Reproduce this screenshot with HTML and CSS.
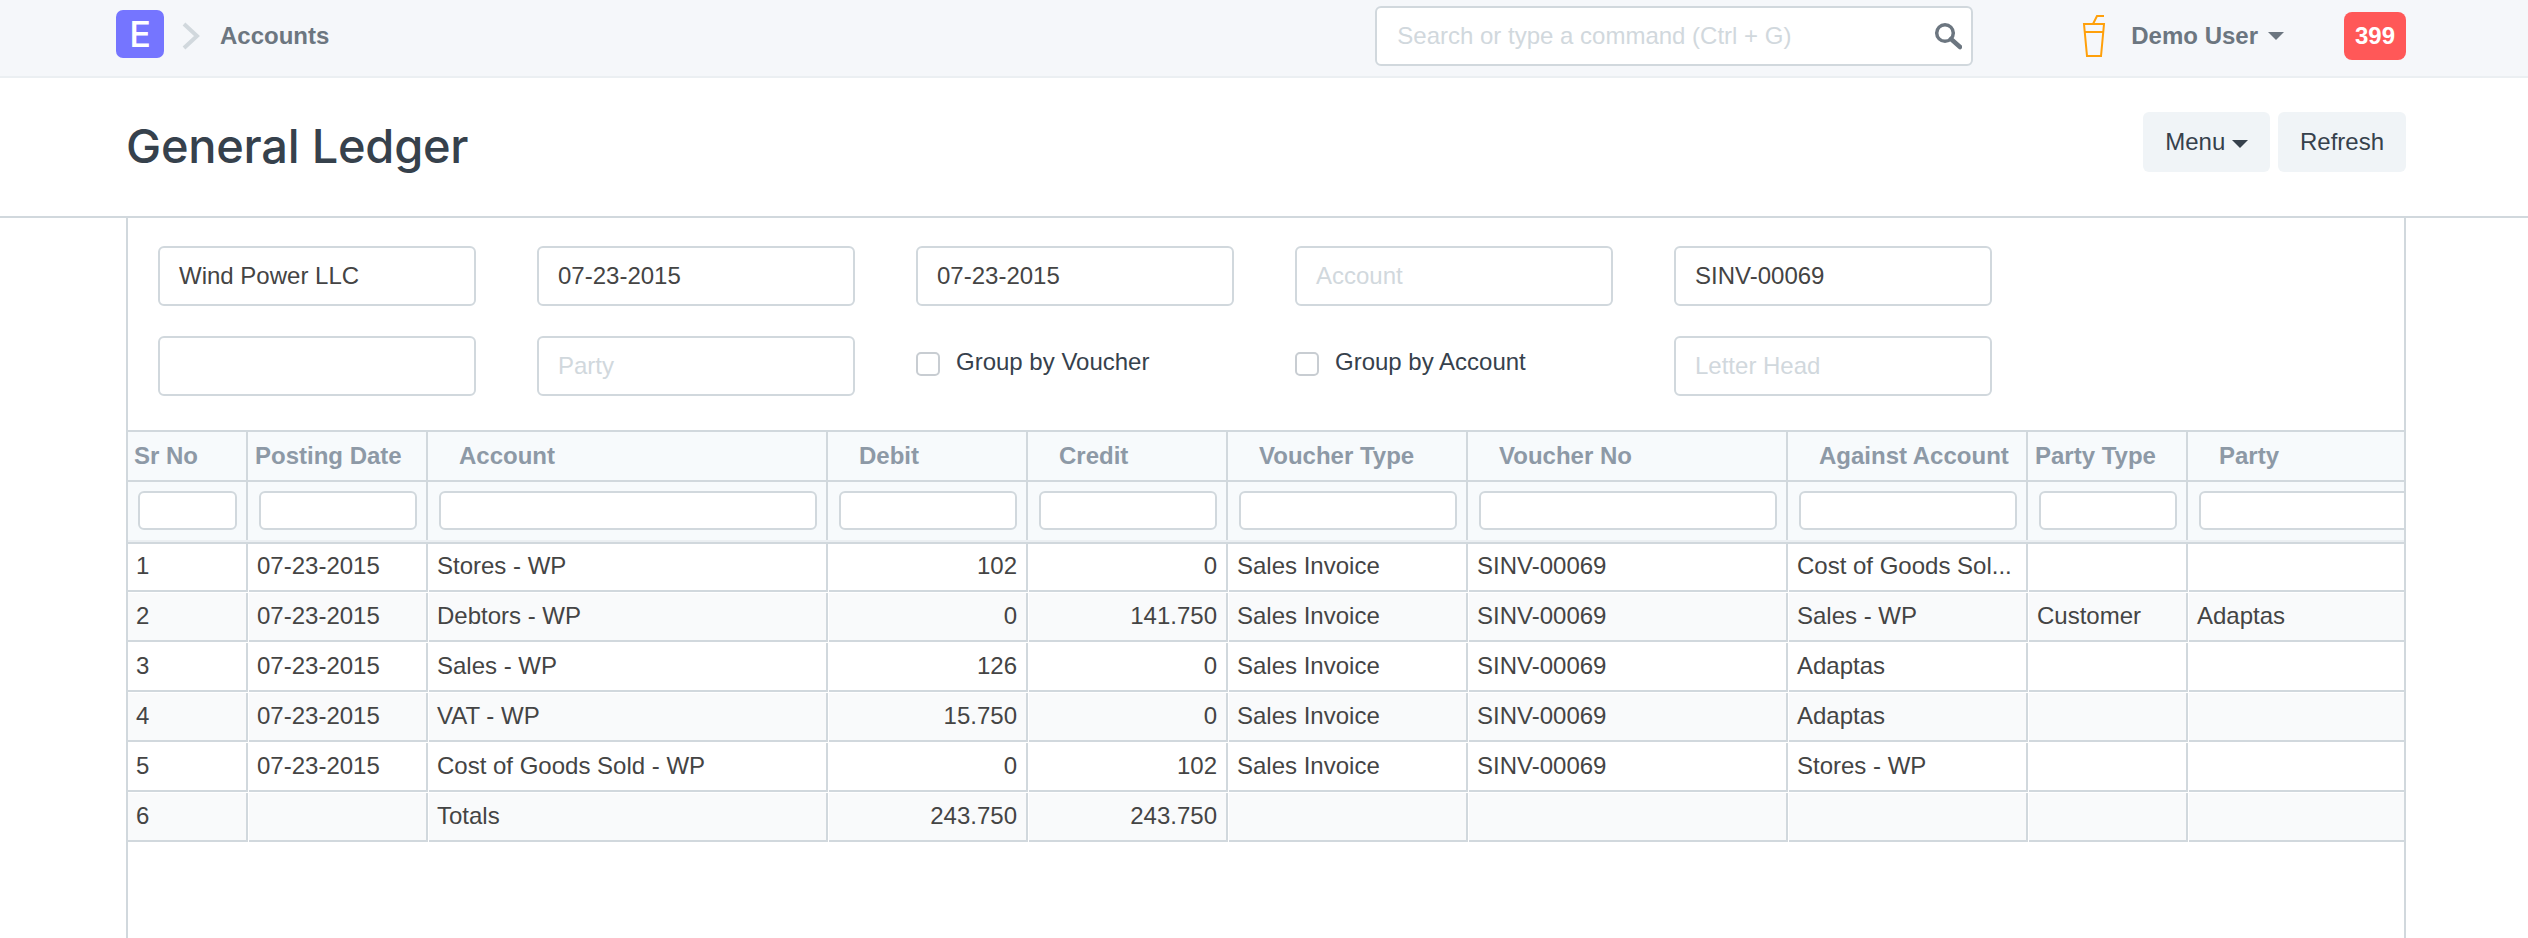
FILE: index.html
```html
<!DOCTYPE html>
<html>
<head>
    <link rel="stylesheet" href="styles.css">
</head>
<body>
    <nav class="navbar">
        <div class="logo">E</div>
        <svg class="crumb-arrow" width="18" height="28" viewBox="0 0 18 28"><path d="M2 2l13 12L2 26" fill="none" stroke="#d1d8dd" stroke-width="4"/></svg>
        <span class="crumb">Accounts</span>
        <div class="search">
            <span class="search-text">Search or type a command (Ctrl + G)</span>
            <svg width="28" height="28" viewBox="0 0 28 28"><circle cx="11" cy="11" r="8.3" fill="none" stroke="#6c7680" stroke-width="3.5"/><path d="M17 17l9 8" stroke="#6c7680" stroke-width="4.5" stroke-linecap="round"/></svg>
        </div>
        <svg class="cup" width="24" height="44" viewBox="0 0 24 44"><path d="M2 10h20l-3 32H5L2 10zM3 18h18M11 10l4-8h7" fill="none" stroke="#ffa00a" stroke-width="2"/></svg>
        <span class="user">Demo User</span>
        <span class="caret user-caret"></span>
        <span class="badge">399</span>
    </nav>

    <header class="page-head">
        <h1>General Ledger</h1>
        <div class="actions">
            <button class="btn">Menu <span class="caret btn-caret"></span></button>
            <button class="btn">Refresh</button>
        </div>
    </header>

    <main class="layout">
        <div class="filters">
            <div class="field">Wind Power LLC</div>
            <div class="field">07-23-2015</div>
            <div class="field">07-23-2015</div>
            <div class="field placeholder">Account</div>
            <div class="field">SINV-00069</div>
            <div class="field"></div>
            <div class="field placeholder">Party</div>
            <label class="check"><span class="box"></span>Group by Voucher</label>
            <label class="check"><span class="box"></span>Group by Account</label>
            <div class="field placeholder">Letter Head</div>
        </div>

        <div class="grid">
            <div class="row head">
                <div class="cell">Sr No</div>
                <div class="cell">Posting Date</div>
                <div class="cell indent">Account</div>
                <div class="cell indent">Debit</div>
                <div class="cell indent">Credit</div>
                <div class="cell indent">Voucher Type</div>
                <div class="cell indent">Voucher No</div>
                <div class="cell indent">Against Account</div>
                <div class="cell">Party Type</div>
                <div class="cell indent">Party</div>
            </div>
            <div class="row search-row">
                <div class="cell"><input></div>
                <div class="cell"><input></div>
                <div class="cell"><input></div>
                <div class="cell"><input></div>
                <div class="cell"><input></div>
                <div class="cell"><input></div>
                <div class="cell"><input></div>
                <div class="cell"><input></div>
                <div class="cell"><input></div>
                <div class="cell"><input></div>
            </div>
            <div class="row">
                <div class="cell">1</div>
                <div class="cell">07-23-2015</div>
                <div class="cell">Stores - WP</div>
                <div class="cell num">102</div>
                <div class="cell num">0</div>
                <div class="cell">Sales Invoice</div>
                <div class="cell">SINV-00069</div>
                <div class="cell">Cost of Goods Sol...</div>
                <div class="cell"></div>
                <div class="cell"></div>
            </div>
            <div class="row">
                <div class="cell">2</div>
                <div class="cell">07-23-2015</div>
                <div class="cell">Debtors - WP</div>
                <div class="cell num">0</div>
                <div class="cell num">141.750</div>
                <div class="cell">Sales Invoice</div>
                <div class="cell">SINV-00069</div>
                <div class="cell">Sales - WP</div>
                <div class="cell">Customer</div>
                <div class="cell">Adaptas</div>
            </div>
            <div class="row">
                <div class="cell">3</div>
                <div class="cell">07-23-2015</div>
                <div class="cell">Sales - WP</div>
                <div class="cell num">126</div>
                <div class="cell num">0</div>
                <div class="cell">Sales Invoice</div>
                <div class="cell">SINV-00069</div>
                <div class="cell">Adaptas</div>
                <div class="cell"></div>
                <div class="cell"></div>
            </div>
            <div class="row">
                <div class="cell">4</div>
                <div class="cell">07-23-2015</div>
                <div class="cell">VAT - WP</div>
                <div class="cell num">15.750</div>
                <div class="cell num">0</div>
                <div class="cell">Sales Invoice</div>
                <div class="cell">SINV-00069</div>
                <div class="cell">Adaptas</div>
                <div class="cell"></div>
                <div class="cell"></div>
            </div>
            <div class="row">
                <div class="cell">5</div>
                <div class="cell">07-23-2015</div>
                <div class="cell">Cost of Goods Sold - WP</div>
                <div class="cell num">0</div>
                <div class="cell num">102</div>
                <div class="cell">Sales Invoice</div>
                <div class="cell">SINV-00069</div>
                <div class="cell">Stores - WP</div>
                <div class="cell"></div>
                <div class="cell"></div>
            </div>
            <div class="row">
                <div class="cell">6</div>
                <div class="cell"></div>
                <div class="cell">Totals</div>
                <div class="cell num">243.750</div>
                <div class="cell num">243.750</div>
                <div class="cell"></div>
                <div class="cell"></div>
                <div class="cell"></div>
                <div class="cell"></div>
                <div class="cell"></div>
            </div>
        </div>
    </main>
</body>
</html>
```

FILE: styles.css
```css
html, body {
    height: 100%;
}

body {
    margin: 0;
    overflow: hidden;
    background: #fff;
    color: #36414c;
    font-family: "Liberation Sans", Arial, sans-serif;
    font-size: 24px;
    display: flex;
    flex-direction: column;
}

/* top bar */
.navbar {
    height: 78px;
    flex: none;
    box-sizing: border-box;
    display: flex;
    align-items: center;
    padding: 0 122px 4px 116px;
    background: #f5f7fa;
    border-bottom: 2px solid #ebeff2;
}

.logo {
    width: 48px;
    height: 48px;
    margin-bottom: 4px;
    border-radius: 7px;
    background: #7575ff;
    color: #fff;
    font-family: Inter, "Liberation Sans", sans-serif;
    font-size: 36px;
    font-weight: 500;
    line-height: 48px;
    text-align: center;
}

.crumb-arrow {
    margin-left: 18px;
}

.crumb {
    margin-left: 20px;
    color: #6c7680;
    font-weight: bold;
}

.search {
    width: 598px;
    height: 60px;
    box-sizing: border-box;
    margin-left: auto;
    margin-right: 109px;
    padding: 0 9px 0 20px;
    display: flex;
    align-items: center;
    justify-content: space-between;
    background: #fff;
    border: 2px solid #d1d8dd;
    border-radius: 6px;
}

.search-text {
    color: #d1d8dd;
}

.cup {
    margin-right: 25px;
}

.user {
    color: #6c7680;
    font-weight: bold;
}

.caret {
    display: inline-block;
    width: 0;
    height: 0;
    border-left: 8px solid transparent;
    border-right: 8px solid transparent;
    border-top: 8px solid #6c7680;
}

.user-caret {
    margin-left: 10px;
}

.badge {
    margin-left: 60px;
    width: 62px;
    height: 48px;
    border-radius: 8px;
    background: #ff5858;
    color: #fff;
    font-weight: bold;
    line-height: 48px;
    text-align: center;
}

/* page title */
.page-head {
    height: 140px;
    flex: none;
    box-sizing: border-box;
    display: flex;
    align-items: center;
    justify-content: space-between;
    padding: 0 122px 0 126px;
    border-bottom: 2px solid #d1d8dd;
}

h1 {
    margin: -3px 0 0;
    font-family: Inter, "Liberation Sans", sans-serif;
    font-size: 47px;
    font-weight: 500;
    letter-spacing: -0.25px;
    color: #36414c;
}

.actions {
    display: flex;
    gap: 8px;
    margin-top: -10px;
}

.btn {
    height: 60px;
    padding: 0 22px;
    border: none;
    border-radius: 6px;
    background: #f0f4f7;
    color: #36414c;
    font-family: inherit;
    font-size: 24px;
}

.btn-caret {
    border-top-color: #36414c;
    vertical-align: middle;
}

/* report area */
.layout {
    width: 2280px;
    flex: 1;
    box-sizing: border-box;
    margin-left: 126px;
    border-left: 2px solid #d1d8dd;
    border-right: 2px solid #d1d8dd;
    overflow: hidden;
}

.filters {
    display: grid;
    grid-template-columns: repeat(5, 318px);
    column-gap: 61px;
    row-gap: 30px;
    padding: 28px 30px 34px;
}

.field {
    height: 60px;
    box-sizing: border-box;
    padding: 0 19px;
    line-height: 56px;
    border: 2px solid #d1d8dd;
    border-radius: 6px;
    color: #444;
}

.field.placeholder {
    color: #d1d8dd;
}

.check {
    display: flex;
    align-items: flex-start;
    color: #36414c;
    line-height: 52px;
}

.box {
    width: 24px;
    height: 24px;
    box-sizing: border-box;
    margin: 16px 16px 0 0;
    border: 2px solid #c8cdd2;
    border-radius: 5px;
}

/* data table */
.grid {
    width: 2500px;
    border-top: 2px solid #d1d8dd;
}

.row {
    display: grid;
    grid-template-columns: 120px 179px 399px 199px 199px 239px 319px 239px 159px 239px;
    column-gap: 1px;
    height: 50px;
    box-sizing: border-box;
    padding-top: 1px;
}

.cell {
    box-sizing: border-box;
    padding: 0 9px 0 8px;
    line-height: 46px;
    color: #444;
    white-space: nowrap;
    border-right: 2px solid #d1d8dd;
    border-bottom: 2px solid #d1d8dd;
}

.row:nth-child(even) .cell {
    background: #f9fafb;
}

.search-row + .row {
    height: 48px;
    padding-top: 0;
}

.search-row + .row .cell {
    line-height: 44px;
}

.num {
    text-align: right;
}

.head,
.search-row {
    padding-top: 0;
    background: #f7fafc;
    border-bottom: 2px solid #d1d8dd;
}

.head {
    height: 50px;
}

.head .cell,
.search-row .cell {
    border-bottom: none;
}

.row.head .cell,
.row.search-row .cell {
    background: #f7fafc;
}

.head .cell {
    padding-left: 6px;
    color: #8d99a6;
    font-weight: bold;
    line-height: 47px;
}

.head .cell.indent {
    padding-left: 30px;
}

/* the filter row ends in a pale band above its line */
.search-row {
    height: 62px;
    padding-bottom: 2px;
    box-shadow: inset 0 -2px #ebeff2;
}

.search-row .cell {
    padding: 9px 9px 0 10px;
}

.search-row input {
    display: block;
    width: 100%;
    height: 39px;
    box-sizing: border-box;
    border: 2px solid #d1d8dd;
    border-radius: 6px;
    background: #fff;
}
```
